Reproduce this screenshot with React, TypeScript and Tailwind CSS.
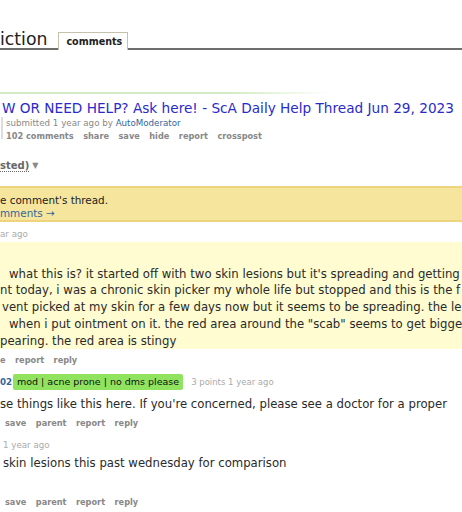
import React from "react";

const F = { fontFamily: '"DejaVu Sans", Verdana, sans-serif' };

function Actions({ items, pl = 0 }: { items: string[]; pl?: number }) {
  return (
    <div className="flex h-[12px] items-center gap-[9.5px] whitespace-nowrap text-[8.2px] font-bold leading-[12px] text-[#888]" style={{ paddingLeft: pl }}>
      {items.map((t, i) => (
        <span key={i}>{t}</span>
      ))}
    </div>
  );
}

export default function App() {
  return (
    <div className="relative h-[512px] w-[462px] overflow-hidden bg-white text-[#222]" style={F}>
      {/* header */}
      <div className="flex h-[50px] items-end gap-[11px] border-b-2 border-[#6d6d6d]">
        <span className="-mb-[2px] whitespace-nowrap text-[17.3px] leading-[22px] text-[#222]">iction</span>
        <span className="-mb-[2px] flex h-[18px] items-center border border-b-0 border-[#c5c1ad] bg-white pl-[7px] pr-[5px] text-[9.6px] font-bold leading-[16px] text-[#222]">
          comments
        </span>
      </div>

      {/* title */}
      <div className="mt-[42px] h-[2px] w-[330px] bg-[linear-gradient(to_right,#d3ebc3_0%,#d3ebc3_70%,rgba(211,235,195,0)_100%)]" />
      <div className="mt-[5px] h-[18px] whitespace-nowrap pl-[2px] text-[13.65px] leading-[18px] text-[#2a2acb]">
        W OR NEED HELP? Ask here! - ScA Daily Help Thread Jun 29, 2023
      </div>
      <div className="flex">
        <div className="ml-[1px] w-[2px] bg-[#ddd]" style={{ height: 22 }} />
        <div className="pl-[3px]">
          <div className="h-[12px] whitespace-nowrap text-[8.7px] leading-[12px] text-[#888]">
            submitted 1 year ago by <span className="text-[#369]">AutoModerator</span>
          </div>
          <div className="mt-[1px]">
            <Actions items={["102 comments", "share", "save", "hide", "report", "crosspost"]} />
          </div>
        </div>
      </div>

      {/* sorted */}
      <div className="mt-[16px] flex h-[16px] items-center gap-[3px] whitespace-nowrap text-[10px] font-bold leading-[16px] text-[#666]">
        <span className="underline decoration-dotted decoration-1 underline-offset-2">sted)</span>
        <span className="text-[8px] text-[#888]">▼</span>
      </div>

      {/* info bar */}
      <div className="mt-[12px] border-y-2 border-[#f0d37f] bg-[#f6e59d] pt-[6px] text-[10.4px] leading-[13px]">
        <div className="whitespace-nowrap text-[#222]">e comment's thread.</div>
        <div className="whitespace-nowrap text-[#369]">mments →</div>
      </div>

      <div className="mt-[6px] h-[12px] whitespace-nowrap text-[8.7px] leading-[12px] text-[#aaa]">ar ago</div>

      {/* highlighted comment */}
      <div className="mt-[2px] bg-[#fefcd0] pt-[23.5px] text-[11.7px] leading-[16.75px] text-[#2a2a2a]">
        <div className="whitespace-nowrap pl-[9px]">what this is? it started off with two skin lesions but it's spreading and getting</div>
        <div className="whitespace-nowrap">nt today, i was a chronic skin picker my whole life but stopped and this is the f</div>
        <div className="whitespace-nowrap pl-[2px]">vent picked at my skin for a few days now but it seems to be spreading. the le</div>
        <div className="whitespace-nowrap pl-[9px]">when i put ointment on it. the red area around the "scab" seems to get bigge</div>
        <div className="whitespace-nowrap">pearing. the red area is stingy</div>
      </div>
      <div className="mt-[4.5px]">
        <Actions items={["e", "report", "reply"]} />
      </div>

      {/* reply */}
      <div className="mt-[8.5px] flex h-[16px] items-center whitespace-nowrap">
        <span className="w-[13px] text-[8.7px] font-bold text-[#369]">02</span>
        <span className="flex h-[16px] items-center rounded-[2px] bg-[#8fe35f] px-[4px] text-[9.5px] leading-[16px] text-[#111]">
          mod | acne prone | no dms please
        </span>
        <span className="ml-[8px] text-[8.5px] text-[#aaa]">3 points 1 year ago</span>
      </div>
      <div className="mt-[5.5px] whitespace-nowrap text-[11.7px] leading-[16.75px] text-[#2a2a2a]">
        se things like this here. If you're concerned, please see a doctor for a proper
      </div>
      <div className="mt-[4.75px]">
        <Actions items={["save", "parent", "report", "reply"]} pl={5} />
      </div>

      <div className="mt-[9.5px] h-[12px] whitespace-nowrap pl-[3px] text-[8.7px] leading-[12px] text-[#aaa]">1 year ago</div>
      <div className="mt-[4px] whitespace-nowrap pl-[3px] text-[11.7px] leading-[16.75px] text-[#2a2a2a]">
        skin lesions this past wednesday for comparison
      </div>
      <div className="mt-[24px]">
        <Actions items={["save", "parent", "report", "reply"]} pl={5} />
      </div>
    </div>
  );
}
